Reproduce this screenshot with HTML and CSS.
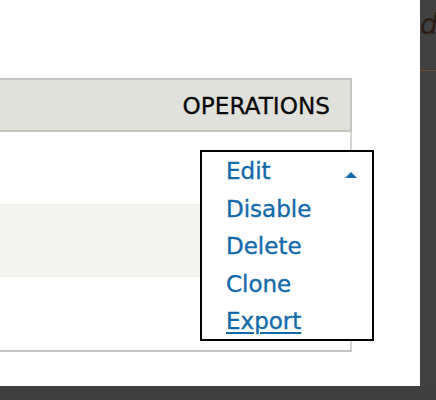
FILE: index.html
```html
<!DOCTYPE html>
<html>
<head>
<meta charset="utf-8">
<link rel="stylesheet" href="styles.css">
</head>
<body>
<div class="screen">
  <div class="modal">
    <div class="table">
      <div class="thead"><span class="th">OPERATIONS</span></div>
      <div class="row"></div>
      <div class="row even"></div>
      <div class="row last"></div>
    </div>
    <div class="dropdown">
      <ul class="menu">
        <li><a href="#">Edit</a></li>
        <li><a href="#">Disable</a></li>
        <li><a href="#">Delete</a></li>
        <li><a href="#">Clone</a></li>
        <li><a href="#" class="hover">Export</a></li>
      </ul>
      <span class="caret"></span>
    </div>
  </div>
  <div class="side">
    <span class="behind">d</span>
    <div class="behind-line"></div>
  </div>
  <div class="bottom"></div>
</div>
</body>
</html>
```
FILE: styles.css
```css
html, body {
  margin: 0;
  padding: 0;
  background: #404040;
}
.screen {
  display: grid;
  grid-template-columns: 420px 16px;
  grid-template-rows: 386px 14px;
  width: 436px;
  height: 400px;
  overflow: hidden;
}
.modal {
  grid-column: 1;
  grid-row: 1;
  background: #fefefe;
  position: relative;
  padding-top: 78px;
  overflow: hidden;
  font-family: "DejaVu Sans", "Liberation Sans", sans-serif;
}
.table {
  width: 354px;
  margin-left: -2px;
}
.thead {
  box-sizing: border-box;
  height: 54px;
  border: 2px solid #c3c3c0;
  background: #e1e1dc;
  display: flex;
  justify-content: flex-end;
  align-items: center;
  padding-right: 20px;
}
.th {
  font-size: 23.2px;
  color: #0a0a0a;
  -webkit-text-stroke: 0.3px #0a0a0a;
}
.row {
  box-sizing: border-box;
  height: 73px;
  border-right: 2px solid #d3d3d0;
  border-bottom: 1px solid #eeeeea;
  background: #fefefe;
}
.row.even {
  height: 72px;
  background: #f3f3ef;
}
.row.last {
  height: 75px;
  border-bottom: 2px solid #c4c4c2;
}
.dropdown {
  position: absolute;
  left: 200px;
  top: 150px;
  width: 170px;
  height: 187px;
  border: 2px solid #000;
  background: #fefefe;
}
.menu {
  list-style: none;
  margin: 0;
  padding: 1px 0 0 24px;
}
.menu li {
  font-size: 23px;
  line-height: 37.5px;
}
.menu a {
  color: #1469a9;
  text-decoration: none;
  -webkit-text-stroke: 0.35px #1469a9;
}
.menu a.hover {
  text-decoration: underline;
  text-decoration-thickness: 1.5px;
  text-underline-offset: 3px;
}
.caret {
  position: absolute;
  right: 15px;
  top: 20px;
  width: 0;
  height: 0;
  border-left: 6px solid transparent;
  border-right: 6px solid transparent;
  border-bottom: 6px solid #1469a9;
}
.side {
  grid-column: 2;
  grid-row: 1;
  background: #414141;
  position: relative;
  overflow: hidden;
}
.behind {
  position: absolute;
  left: 0;
  top: 8px;
  font-family: "DejaVu Sans", sans-serif;
  font-style: italic;
  font-size: 28px;
  color: #2a1c14;
}
.behind-line {
  position: absolute;
  left: 0;
  right: 0;
  top: 70px;
  height: 1px;
  background: #6e4a32;
}
.bottom {
  grid-column: 1 / 3;
  grid-row: 2;
  background: #3f3f3f;
}
```
